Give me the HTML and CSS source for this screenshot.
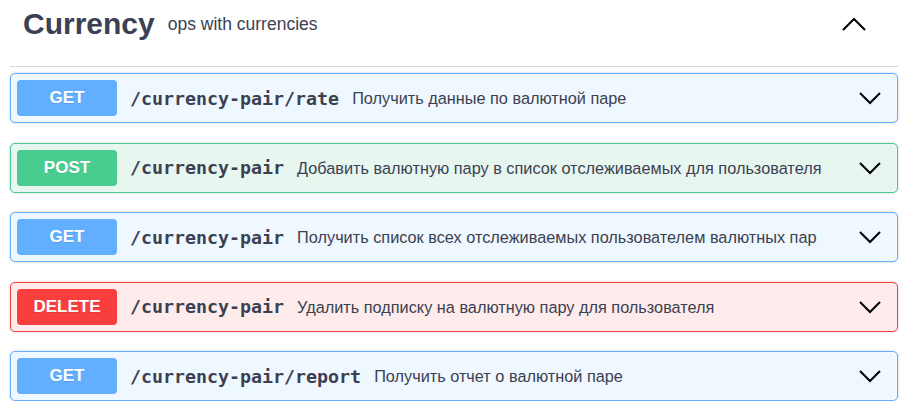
FILE: index.html
```html
<!DOCTYPE html>
<html lang="ru">
<head>
<meta charset="utf-8">
<link rel="stylesheet" href="styles.css">
</head>
<body>
<div class="section">
  <div class="tag">
    <h3 class="tag-title">Currency</h3>
    <span class="tag-desc">ops with currencies</span>
    <svg class="tag-arrow" width="26" height="16" viewBox="0 0 26 16"><path d="M2 14 L13 3 L24 14" fill="none" stroke="#000" stroke-width="2"/></svg>
  </div>
  <div class="ops">
    <div class="op op-get">
      <span class="method">GET</span>
      <span class="path">/currency-pair/rate</span>
      <span class="summary">Получить данные по валютной паре</span>
      <svg class="chev" width="24" height="16" viewBox="0 0 24 16"><path d="M2 3 L12 13 L22 3" fill="none" stroke="#000" stroke-width="2"/></svg>
    </div>
    <div class="op op-post">
      <span class="method">POST</span>
      <span class="path">/currency-pair</span>
      <span class="summary">Добавить валютную пару в список отслеживаемых для пользователя</span>
      <svg class="chev" width="24" height="16" viewBox="0 0 24 16"><path d="M2 3 L12 13 L22 3" fill="none" stroke="#000" stroke-width="2"/></svg>
    </div>
    <div class="op op-get">
      <span class="method">GET</span>
      <span class="path">/currency-pair</span>
      <span class="summary">Получить список всех отслеживаемых пользователем валютных пар</span>
      <svg class="chev" width="24" height="16" viewBox="0 0 24 16"><path d="M2 3 L12 13 L22 3" fill="none" stroke="#000" stroke-width="2"/></svg>
    </div>
    <div class="op op-delete">
      <span class="method">DELETE</span>
      <span class="path">/currency-pair</span>
      <span class="summary">Удалить подписку на валютную пару для пользователя</span>
      <svg class="chev" width="24" height="16" viewBox="0 0 24 16"><path d="M2 3 L12 13 L22 3" fill="none" stroke="#000" stroke-width="2"/></svg>
    </div>
    <div class="op op-get">
      <span class="method">GET</span>
      <span class="path">/currency-pair/report</span>
      <span class="summary">Получить отчет о валютной паре</span>
      <svg class="chev" width="24" height="16" viewBox="0 0 24 16"><path d="M2 3 L12 13 L22 3" fill="none" stroke="#000" stroke-width="2"/></svg>
    </div>
  </div>
</div>
</body>
</html>
```
FILE: styles.css
```css
html, body {
  margin: 0;
  padding: 0;
  background: #fff;
}
body {
  font-family: "Liberation Sans", Arial, sans-serif;
  color: #3b4151;
}
.section {
  padding: 0 11px 0 10px;
}
.tag {
  display: flex;
  align-items: center;
  height: 67px;
  box-sizing: border-box;
  padding: 0 31px 19px 13px;
  border-bottom: 1px solid #d8d8dc;
}
.tag-title {
  margin: 0;
  font-size: 30px;
  font-weight: 700;
  color: #3b4151;
}
.tag-desc {
  margin-left: 13px;
  font-size: 17.5px;
  color: #3b4151;
  padding-top: 1px;
}
.tag-arrow {
  margin-left: auto;
}
.ops {
  padding-top: 6px;
  display: flex;
  flex-direction: column;
  gap: 19.5px;
}
.op {
  display: flex;
  align-items: center;
  height: 50px;
  box-sizing: border-box;
  border: 1px solid;
  border-radius: 5px;
  padding: 0 15px 0 6px;
  box-shadow: 0 0 3px rgba(0,0,0,.19);
}
.method {
  width: 100px;
  height: 36px;
  border-radius: 4px;
  display: flex;
  align-items: center;
  justify-content: center;
  color: #fff;
  font-weight: 700;
  font-size: 17px;
  text-shadow: 0 1px 0 rgba(0,0,0,.1);
  flex: none;
}
.path {
  font-family: "DejaVu Sans Mono", monospace;
  font-weight: 700;
  font-size: 18.3px;
  color: #3b4151;
  padding: 0 13px;
}
.summary {
  font-size: 16.3px;
  color: #3b4151;
  padding-top: 1px;
}
.chev {
  margin-left: auto;
}
.op-get {
  background: #eff7ff;
  border-color: #61affe;
}
.op-get .method { background: #61affe; }
.op-post {
  background: #e8f6f0;
  border-color: #49cc90;
}
.op-post .method { background: #49cc90; }
.op-delete {
  background: #feebeb;
  border-color: #f93e3e;
}
.op-delete .method { background: #f93e3e; }
```
